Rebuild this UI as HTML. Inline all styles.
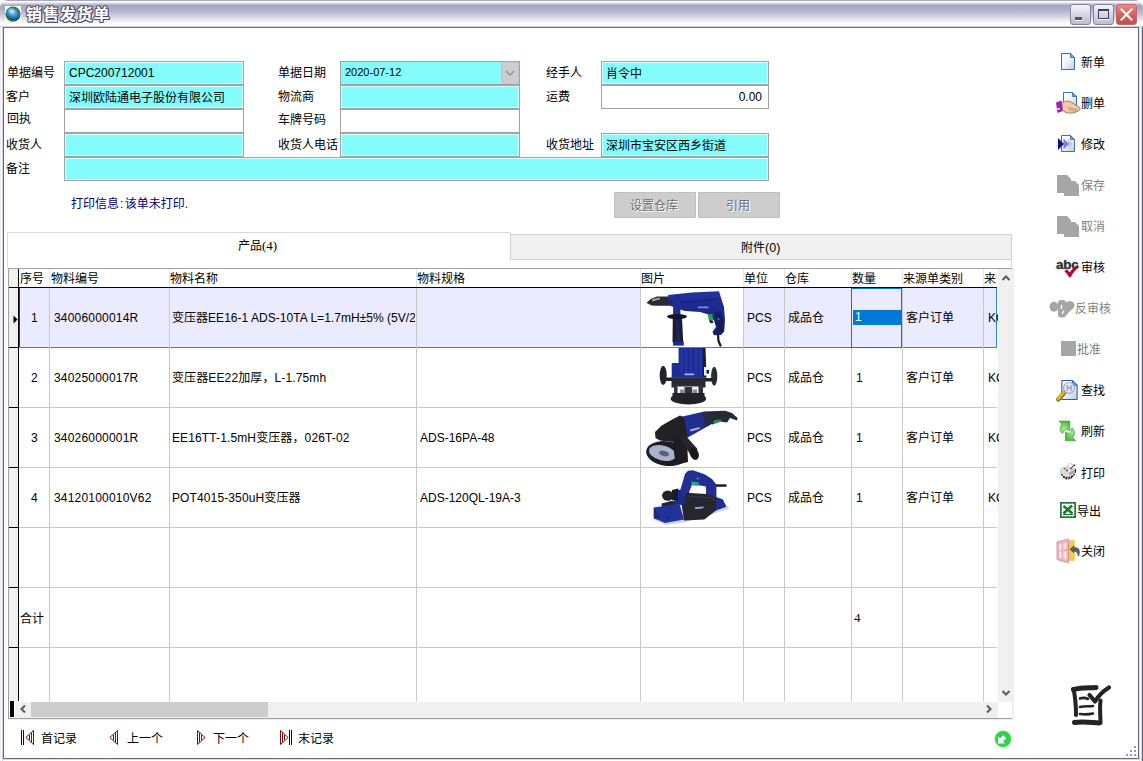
<!DOCTYPE html>
<html lang="zh-CN">
<head>
<meta charset="utf-8">
<title>销售发货单</title>
<style>
*{box-sizing:border-box;margin:0;padding:0}
html,body{width:1143px;height:761px;overflow:hidden;background:#fff}
body{position:relative;font-family:"Liberation Sans","Noto Sans CJK SC",sans-serif;font-size:12px;color:#000;line-height:14px}
.abs{position:absolute}
/* window frame */
#frame-l{left:0;top:0;width:4px;height:761px;background:linear-gradient(90deg,#ededf3 0,#ededf3 1px,#fff 1px,#fff 2px,#d2d2e2 2px,#d2d2e2 3px,#66667f 3px,#66667f 4px)}
#frame-r{left:1138px;top:0;width:5px;height:761px;background:linear-gradient(90deg,#66667f 0,#66667f 1px,#e2e2ee 1px,#e2e2ee 2px,#fff 2px,#fff 3px,#d6d6e6 3px,#d6d6e6 4px,#62627a 4px,#62627a 5px)}
#frame-b{left:3px;top:758px;width:1136px;height:3px;background:linear-gradient(180deg,#66667f 0,#66667f 1px,#dadae8 1px,#dadae8 2px,#fff 2px,#fff 3px)}
#titlebar{left:0;top:0;width:1143px;height:28px;background:linear-gradient(180deg,#a9a9b9 0,#a9a9b9 1px,#fff 1px,#fff 2px,#ececf2 2.5px,#c6c6d6 4px,#a6a6c1 5.5px,#adadc6 9px,#c4c4d6 14px,#dcdce6 18px,#f6f6f9 22px,#fff 24px,#fff 26px,#cfcfd9 26px,#cfcfd9 27px,#707088 27px,#707088 28px);border-radius:8px 8px 0 0}
#title{left:26px;top:5px;font-size:16px;line-height:20px;font-weight:bold;color:#fff;letter-spacing:0.9px;text-shadow:1px 1px 0 #4a4a64,-1px 0 0 #5e5e7a,0 -1px 0 #5e5e7a,1px 0 0 #4a4a64,0 1px 0 #4a4a64,-1px -1px 0 #6a6a86,1px -1px 0 #5e5e7a,-1px 1px 0 #5e5e7a}
.tb{top:4px;width:21px;height:21px;border-radius:3px;border:1px solid #8484a0;background:linear-gradient(180deg,#f4f4f9 0,#d4d4e2 55%,#bdbdd0 100%)}
/* form */
.lbl{height:14px;white-space:nowrap}
.fld{height:24px;border:1px solid #a3a3a3;background:#fff;box-shadow:inset 0 0 0 1px #fff;padding:4px 0 0 4px;white-space:nowrap;overflow:hidden}
.cy{background:#84fcfc;box-shadow:inset 0 0 0 1px #d6ffff}
.btn{height:26px;background:#cdcdcd;border:1px solid #c0c0c0;color:#707070;text-align:center;line-height:26px;padding-right:2px;text-shadow:1px 1px 0 #fff}
/* grid */
.vl{width:1px;background:#c8c8c8}
.hl{height:1px;background:#c8c8c8}
.cell{white-space:nowrap;overflow:hidden;height:14px}
.side{white-space:nowrap;height:14px}
.nav{white-space:nowrap;height:14px;top:732px}
</style>
</head>
<body>
<!-- title bar -->
<div id="titlebar" class="abs"></div>
<div id="frame-l" class="abs" style="top:27px"></div>
<div id="frame-r" class="abs" style="top:27px"></div>
<div id="frame-b" class="abs"></div>
<svg class="abs" style="left:5px;top:6px" width="16" height="16" viewBox="0 0 16 16">
<defs><radialGradient id="gl" cx="0.35" cy="0.35" r="0.7"><stop offset="0" stop-color="#e4f6ff"/><stop offset="0.400" stop-color="#4a9fe0"/><stop offset="1" stop-color="#0b4486"/></radialGradient></defs>
<rect width="16" height="16" fill="#fff"/>
<circle cx="8" cy="8.200" r="7.600" fill="#3a7a1c"/>
<ellipse cx="8" cy="8.300" rx="7.500" ry="5.700" transform="rotate(35 8 8)" fill="url(#gl)"/>
</svg>
<div id="title" class="abs">销售发货单</div>
<div class="abs tb" style="left:1070px"><div class="abs" style="left:4px;top:12px;width:7px;height:4px;background:#55556f;border-bottom:1px solid #fff"></div></div>
<div class="abs tb" style="left:1093px"><div class="abs" style="left:4px;top:4px;width:11px;height:10px;border:1px solid #3f3f5c;border-top-width:2px;box-shadow:0 1px 0 #fff"></div></div>
<div class="abs tb" style="left:1116px;background:linear-gradient(180deg,#e98a86 0,#d95f5c 50%,#c94f4e 100%);border-color:#c06a70">
<svg class="abs" style="left:2px;top:2px" width="15" height="15" viewBox="0 0 15 15"><path d="M1.800 1.800L13.200 13.200M13.200 1.800L1.800 13.200" stroke="#fff" stroke-width="2.300" stroke-linecap="butt"/></svg></div>

<!-- FORM -->
<div id="form">
<div class="abs lbl" style="left:7px;top:66px">单据编号</div>
<div class="abs fld cy" style="left:64px;top:61px;width:180px">CPC200712001</div>
<div class="abs lbl" style="left:6px;top:90px">客户</div>
<div class="abs fld cy" style="left:64px;top:85px;width:180px;padding-top:5px">深圳欧陆通电子股份有限公司</div>
<div class="abs lbl" style="left:7px;top:112px">回执</div>
<div class="abs fld" style="left:64px;top:109px;width:180px"></div>
<div class="abs lbl" style="left:6px;top:138px">收货人</div>
<div class="abs fld cy" style="left:64px;top:133px;width:180px"></div>
<div class="abs lbl" style="left:6px;top:162px">备注</div>
<div class="abs fld cy" style="left:64px;top:157px;width:705px;height:24px"></div>

<div class="abs lbl" style="left:278px;top:66px">单据日期</div>
<div class="abs fld cy" style="left:340px;top:61px;width:180px;font-size:11px;padding:3px 0 0 4px;box-shadow:none">2020-07-12</div>
<div class="abs" style="left:501px;top:62px;width:18px;height:22px;background:#cdcdcd;border:1px solid #b9c9da"><svg class="abs" style="left:3px;top:7px" width="10" height="6" viewBox="0 0 10 6"><path d="M0.800 0.800L5 5L9.200 0.800" fill="none" stroke="#868686" stroke-width="1.100"/></svg></div>
<div class="abs lbl" style="left:278px;top:90px">物流商</div>
<div class="abs fld cy" style="left:340px;top:85px;width:180px"></div>
<div class="abs lbl" style="left:278px;top:113px">车牌号码</div>
<div class="abs fld" style="left:340px;top:109px;width:180px"></div>
<div class="abs lbl" style="left:278px;top:138px">收货人电话</div>
<div class="abs fld cy" style="left:340px;top:133px;width:180px"></div>

<div class="abs lbl" style="left:546px;top:66px">经手人</div>
<div class="abs fld cy" style="left:601px;top:61px;width:168px;padding-top:5px">肖令中</div>
<div class="abs lbl" style="left:546px;top:90px">运费</div>
<div class="abs fld" style="left:601px;top:85px;width:168px;text-align:right;padding-right:6px">0.00</div>
<div class="abs lbl" style="left:546px;top:138px">收货地址</div>
<div class="abs fld cy" style="left:601px;top:133px;width:168px;padding-top:5px">深圳市宝安区西乡街道</div>

<div class="abs lbl" style="left:71px;top:197px;color:#000080">打印信息<span style="margin:0 1.500px 0 1px">:</span>该单未打印.</div>
<div class="abs btn" style="left:614px;top:192px;width:82px">设置仓库</div>
<div class="abs btn" style="left:698px;top:192px;width:82px">引用</div>
</div>
<!-- TABS -->
<div id="tabs">
<div class="abs" style="left:7px;top:232px;width:504px;height:28px;border:1px solid #d9d9d9;border-bottom:0;background:#fff"></div><div class="abs" style="left:7px;top:259px;width:1px;height:10px;background:#d9d9d9"></div>
<div class="abs" style="left:510px;top:234px;width:502px;height:26px;border:1px solid #d0d0d0;background:#f0f0f0"></div>
<div class="abs" style="left:1011px;top:259px;width:1px;height:10px;background:#d9d9d9"></div>
<div class="abs" style="left:238px;top:239px;height:14px;white-space:nowrap">产品<span style="font-family:'Liberation Serif',serif;font-size:13px">(4)</span></div>
<div class="abs" style="left:741px;top:241px;height:14px;white-space:nowrap">附件<span style="font-size:12.5px">(0)</span></div>
</div>
<!-- GRID -->
<div id="grid">
<div class="abs" style="left:8px;top:268px;width:1006px;height:452px;background:#eee"></div><div class="abs" style="left:8px;top:268px;width:1004px;height:451px;border:1px solid #a0a0a0;border-right:0;background:#fff"></div>
<div class="abs" style="left:19px;top:288px;width:978px;height:60px;background:#ebebff;border-right:1px solid #2a8ad4;border-bottom:1px solid #2a8ad4"></div>
<div class="abs" style="left:641px;top:288px;width:102px;height:59px;background:#fff"></div>
<div class="abs" style="left:9px;top:269px;width:9px;height:432px;background:#f0f0f0"></div>
<div class="abs" style="left:18px;top:269px;width:1px;height:432px;background:#000"></div>
<div class="abs" style="left:998px;top:269px;width:16px;height:433px;background:#f0f0f0"></div>
<div class="abs" style="left:15px;top:702px;width:983px;height:16px;background:#f0f0f0"></div>
<div class="abs" style="left:998px;top:702px;width:14px;height:16px;background:#fff"></div>
<div class="abs" style="left:10px;top:701px;width:4px;height:16px;background:#000"></div>
<div class="abs" style="left:31px;top:702px;width:237px;height:15px;background:#cdcdcd"></div>
<div class="abs vl" style="left:49px;top:288px;height:413px"></div>
<div class="abs vl" style="left:49px;top:269px;height:18px;background:#e5e5e5"></div>
<div class="abs vl" style="left:169px;top:288px;height:413px"></div>
<div class="abs vl" style="left:169px;top:269px;height:18px;background:#e5e5e5"></div>
<div class="abs vl" style="left:416px;top:288px;height:413px"></div>
<div class="abs vl" style="left:416px;top:269px;height:18px;background:#e5e5e5"></div>
<div class="abs vl" style="left:640px;top:288px;height:413px"></div>
<div class="abs vl" style="left:640px;top:269px;height:18px;background:#e5e5e5"></div>
<div class="abs vl" style="left:743px;top:288px;height:413px"></div>
<div class="abs vl" style="left:743px;top:269px;height:18px;background:#e5e5e5"></div>
<div class="abs vl" style="left:784px;top:288px;height:413px"></div>
<div class="abs vl" style="left:784px;top:269px;height:18px;background:#e5e5e5"></div>
<div class="abs vl" style="left:851px;top:288px;height:413px"></div>
<div class="abs vl" style="left:851px;top:269px;height:18px;background:#e5e5e5"></div>
<div class="abs vl" style="left:902px;top:288px;height:413px"></div>
<div class="abs vl" style="left:902px;top:269px;height:18px;background:#e5e5e5"></div>
<div class="abs vl" style="left:983px;top:288px;height:413px"></div>
<div class="abs vl" style="left:983px;top:269px;height:18px;background:#e5e5e5"></div>
<div class="abs" style="left:9px;top:287px;width:988px;height:1px;background:#000"></div>
<div class="abs hl" style="left:19px;top:407px;width:978px"></div>
<div class="abs" style="left:9px;top:407px;width:10px;height:1px;background:#000"></div>
<div class="abs hl" style="left:19px;top:467px;width:978px"></div>
<div class="abs" style="left:9px;top:467px;width:10px;height:1px;background:#000"></div>
<div class="abs hl" style="left:19px;top:527px;width:978px"></div>
<div class="abs" style="left:9px;top:527px;width:10px;height:1px;background:#000"></div>
<div class="abs hl" style="left:19px;top:587px;width:978px"></div>
<div class="abs" style="left:9px;top:587px;width:10px;height:1px;background:#000"></div>
<div class="abs hl" style="left:19px;top:647px;width:978px"></div>
<div class="abs" style="left:9px;top:647px;width:10px;height:1px;background:#000"></div>
<div class="abs" style="left:9px;top:347px;width:10px;height:1px;background:#000"></div>
<div class="abs cell" style="left:20px;top:272px">序号</div>
<div class="abs cell" style="left:51px;top:272px">物料编号</div>
<div class="abs cell" style="left:170px;top:272px">物料名称</div>
<div class="abs cell" style="left:417px;top:272px">物料规格</div>
<div class="abs cell" style="left:641px;top:272px">图片</div>
<div class="abs cell" style="left:744px;top:272px">单位</div>
<div class="abs cell" style="left:785px;top:272px">仓库</div>
<div class="abs cell" style="left:852px;top:272px">数量</div>
<div class="abs cell" style="left:903px;top:272px">来源单类别</div>
<div class="abs cell" style="left:984px;top:272px;width:13px">来源</div>
<div class="abs cell" style="left:31px;top:311px">1</div>
<div class="abs cell" style="left:54px;top:311px;letter-spacing:0.2px">34006000014R</div>
<div class="abs cell" style="left:172px;top:311px;width:243px;letter-spacing:0.030px">变压器EE16-1 ADS-10TA L=1.7mH±5% (5V/2A)</div>
<div class="abs cell" style="left:747px;top:311px">PCS</div>
<div class="abs cell" style="left:788px;top:311px">成品仓</div>
<div class="abs cell" style="left:906px;top:311px">客户订单</div>
<div class="abs cell" style="left:988px;top:311px;width:10px">KC</div>
<div class="abs cell" style="left:31px;top:371px">2</div>
<div class="abs cell" style="left:54px;top:371px;letter-spacing:0.2px">34025000017R</div>
<div class="abs cell" style="left:172px;top:371px;width:244px;letter-spacing:0.120px">变压器EE22加厚，L-1.75mh</div>
<div class="abs cell" style="left:747px;top:371px">PCS</div>
<div class="abs cell" style="left:788px;top:371px">成品仓</div>
<div class="abs cell" style="left:856px;top:371px">1</div>
<div class="abs cell" style="left:906px;top:371px">客户订单</div>
<div class="abs cell" style="left:988px;top:371px;width:11px">KC</div>
<div class="abs cell" style="left:31px;top:431px">3</div>
<div class="abs cell" style="left:54px;top:431px;letter-spacing:0.2px">34026000001R</div>
<div class="abs cell" style="left:172px;top:431px;width:244px;letter-spacing:0.120px">EE16TT-1.5mH变压器，026T-02</div>
<div class="abs cell" style="left:420px;top:431px">ADS-16PA-48</div>
<div class="abs cell" style="left:747px;top:431px">PCS</div>
<div class="abs cell" style="left:788px;top:431px">成品仓</div>
<div class="abs cell" style="left:856px;top:431px">1</div>
<div class="abs cell" style="left:906px;top:431px">客户订单</div>
<div class="abs cell" style="left:988px;top:431px;width:11px">KC</div>
<div class="abs cell" style="left:31px;top:491px">4</div>
<div class="abs cell" style="left:54px;top:491px;letter-spacing:0.2px">34120100010V62</div>
<div class="abs cell" style="left:172px;top:491px;width:244px;letter-spacing:0.120px">POT4015-350uH变压器</div>
<div class="abs cell" style="left:420px;top:491px">ADS-120QL-19A-3</div>
<div class="abs cell" style="left:747px;top:491px">PCS</div>
<div class="abs cell" style="left:788px;top:491px">成品仓</div>
<div class="abs cell" style="left:856px;top:491px">1</div>
<div class="abs cell" style="left:906px;top:491px">客户订单</div>
<div class="abs cell" style="left:988px;top:491px;width:11px">KC</div>
<div class="abs" style="left:851px;top:288px;width:51px;height:60px;border:1px solid #0078d7"></div>
<div class="abs cell" style="left:853px;top:310px;width:48px;height:15px;background:#0078d7;color:#fff;padding-left:2px">1</div>
<div class="abs cell" style="left:20px;top:612px">合计</div>
<div class="abs cell" style="left:854px;top:611px;font-family:'Liberation Serif',serif;font-size:13px">4</div>
<svg class="abs" style="left:13px;top:315px" width="5" height="9" viewBox="0 0 5 9"><path d="M0.5 0.5L4.5 4.5L0.5 8.5Z" fill="#000"/></svg>
<svg class="abs" style="left:1001px;top:274px" width="10" height="7" viewBox="0 0 10 7"><path d="M1.500 6L5 2.500L8.500 6" fill="none" stroke="#5a5a5a" stroke-width="2"/></svg>
<svg class="abs" style="left:1001px;top:690px" width="10" height="7" viewBox="0 0 10 7"><path d="M1.500 1L5 4.500L8.500 1" fill="none" stroke="#5a5a5a" stroke-width="2"/></svg>
<svg class="abs" style="left:19px;top:704px" width="7" height="10" viewBox="0 0 7 10"><path d="M6 1.500L2.500 5L6 8.500" fill="none" stroke="#5a5a5a" stroke-width="2"/></svg>
<svg class="abs" style="left:986px;top:704px" width="7" height="10" viewBox="0 0 7 10"><path d="M1 1.500L4.500 5L1 8.500" fill="none" stroke="#5a5a5a" stroke-width="2"/></svg>
</div>
<div id="imgs">
<div class="abs" style="left:641px;top:348px;width:102px;height:59px;background:#fff"></div>
<svg class="abs" style="left:640px;top:287px" width="105" height="62" viewBox="0 0 105 62">
<defs><filter id="bl" x="-5%" y="-5%" width="110%" height="110%"><feGaussianBlur stdDeviation="0.45"/></filter>
<linearGradient id="bluv" x1="0" y1="0" x2="0" y2="1"><stop offset="0" stop-color="#2232a0"/><stop offset="1" stop-color="#151d6c"/></linearGradient></defs>
<g filter="url(#bl)">
<path d="M6.400 15.800L11.500 11.500L17 9.500H30V18.800H17L11.500 18.500Z" fill="#2c2c36"/>
<path d="M12 12L20 10.500V12.500L12 14.500Z" fill="#9a9aa6"/>
<path d="M28 8L52 5.500L79 4.300L80.500 9L84 20L85 33L84.200 44.500L81 48L74 48.300L72.500 45L76 40L74 33.500L68.500 27.500L60 25L45 24L40 22.500L29.500 18.500Z" fill="url(#bluv)"/>
<path d="M30 16L60 14L79 12" stroke="#141d6a" stroke-width="1.200" fill="none"/>
<path d="M58 19.500H68.500V21.200H58Z" fill="#7f8fe0"/>
<path d="M74 26L80 24L83 33L82.500 44L79 47L78 38Z" fill="#141a52" opacity="0.750"/><path d="M67.500 27.500L72.500 27L73 34.500L69.500 35.500Z" fill="#25a05a"/>
<path d="M69.500 33L72.500 34L73.500 36L70.500 36.200Z" fill="#15151c"/>
<circle cx="78.500" cy="32" r="1.100" fill="#2a8ad0"/>
<path d="M78 48L78.500 54L80.500 58.500" stroke="#15151c" stroke-width="2.200" fill="none" stroke-linecap="round"/>
<path d="M33.500 9L40 8.500L40.500 29H33Z" fill="#1f2e96"/>
<ellipse cx="37" cy="29.600" rx="10" ry="2.600" fill="#13152a"/>
<path d="M32.800 31.500H42L43.200 55H32.500Z" fill="#1a1b2a"/>
<path d="M36 33L39 33L40 54H36.500Z" fill="#202c7c" opacity="0.700"/>
<path d="M33 54.500H43.800V58.600H33Z" fill="#1c2a94"/>
</g></svg>
<svg class="abs" style="left:640px;top:347px" width="105" height="62" viewBox="0 0 105 62">
<g filter="url(#bl)">
<path d="M38.600 1H63.400V30.500H31.700V16H38.600Z" fill="#1f2d96"/>
<path d="M41.500 2V28M46 2V28M51 2V28M56 2V28M60.500 2V28" stroke="#3446b8" stroke-width="0.700"/>
<path d="M63 1H65.500L66.500 30.500H63Z" fill="#1a1a24"/>
<path d="M64 20H67.500V28.500H64Z" fill="#f2f2f6"/>
<path d="M66.500 23H69V26.500H66.500Z" fill="#16162a"/>
<path d="M44.500 26.500H54V28.200H44.500Z" fill="#a9b4ee"/>
<path d="M31.500 30.300H65.500V40.500H31.500Z" fill="#2c2c36"/>
<ellipse cx="23.200" cy="28.400" rx="3.500" ry="9.600" fill="#23232c"/>
<path d="M25 30.500H32V34H25Z" fill="#23232c"/>
<ellipse cx="74.200" cy="29.200" rx="3.100" ry="9.500" fill="#2b2b34"/>
<path d="M65 31H72V34.500H65Z" fill="#23232c"/>
<path d="M36.500 39.500H60V47H36.500Z" fill="#f4f4f6"/>
<path d="M34 38H37.500V48H34ZM44.500 40H52V47H44.500ZM58.500 38H63V48H58.500Z" fill="#30303a"/>
<path d="M40 42.500H44V46H40ZM52.500 42.500H57V46H52.500Z" fill="#8c8c96"/>
<ellipse cx="48.400" cy="51.700" rx="17.700" ry="5.800" fill="#202028"/>
<path d="M32.500 46H64.500V52H32.500Z" fill="#24242c"/>
</g></svg>
<svg class="abs" style="left:640px;top:407px" width="105" height="62" viewBox="0 0 105 62">
<g filter="url(#bl)">
<ellipse cx="26.600" cy="46.600" rx="20.600" ry="12.300" fill="#1b1b22" transform="rotate(8 26.600 46.600)"/>
<ellipse cx="22.500" cy="46" rx="13.800" ry="7.600" fill="#a9b3c9" transform="rotate(14 22.500 46)"/>
<ellipse cx="24" cy="46.500" rx="5" ry="2.600" fill="#59607a" transform="rotate(14 24 46.500)"/>
<path d="M64 4.600L85 3.800L92 6L97.600 11L97 13.600L90 11L87 15.500L80 14.500L72.500 17.500L64 12Z" fill="#282a30"/>
<path d="M74 13L82 12.500L80 15L73 17Z" fill="#2b8a58"/>
<path d="M40.400 10L64.300 4.600L72.600 16.500L47.800 30.500Z" fill="#222d8e"/>
<path d="M62 7L70 6L73 16L66 20Z" fill="#262a44"/>
<path d="M50 22.500L59.500 20V22L50.500 24.500Z" fill="#a9b4ee"/>
<path d="M15 25L21 19L33 12L40 8.500L44 10.500L46 22L48 30L40 36.500L33 35L20 33.500L15.500 31Z" fill="#202026"/>
<path d="M33 33L40 29L47 31L48 55L36 58L34 46Z" fill="#1d1d24"/>
<path d="M38.500 29.500L45 28L57.500 42L52 50Z" fill="#25252c"/>
<ellipse cx="54.300" cy="46.800" rx="4.300" ry="6.200" fill="#16161c" transform="rotate(-20 54.300 46.800)"/>
</g></svg>
<svg class="abs" style="left:640px;top:467px" width="105" height="62" viewBox="0 0 105 62">
<g filter="url(#bl)">
<path d="M11 51.500L43 49L88 39.500L89 42L46 55L26 58Z" fill="#cdd4e6"/>
<path d="M76 30L82.700 32.200L86.500 39.800L76 43.500Z" fill="#202d92"/>
<path d="M76 17.300H86.500V19.800H76Z" fill="#1a1a22"/>
<path d="M40 24L45 7L48 3.700L53 3.200L64.500 7.300L72 12L76.300 17.500L76.500 31L66 28L66 19.500L52.400 17L49.500 24L47 37L40 38Z" fill="#202d92"/>
<path d="M51.400 14.500L58.500 15.200L58.800 19L51.400 18.200Z" fill="#25a58a"/>
<circle cx="57.600" cy="11.500" r="1.100" fill="#2a9ad0"/>
<path d="M46.800 25.700L66 27L76.300 30.300V43.300L64.300 52.400L44 53.500L41.500 37Z" fill="#25252d"/>
<path d="M48 29L70 30.500L75 33" stroke="#3a3a44" stroke-width="1" fill="none"/>
<path d="M55 40.300L63.500 39.500V41.300L55 42.300Z" fill="#9aa4dc"/>
<path d="M33.500 23.500L40.500 22.500L46 37L34 38Z" fill="#1e2b8e"/>
<ellipse cx="27.800" cy="28.600" rx="5.800" ry="5.200" fill="#202028"/>
<path d="M21.500 36.500L33 33.500L36 38L22 40.500Z" fill="#26262e"/>
<path d="M32 23L38 21.500V33H32Z" fill="#1f1f28"/>
<path d="M13.800 40.400L39.500 36.700L44 52.500L25 56L13.800 51Z" fill="#213099"/>
<path d="M13.800 40.400L17 46.500L16.500 52.500L13.800 51Z" fill="#1a2682"/>
<circle cx="18.500" cy="49.300" r="0.900" fill="#121a5a"/><circle cx="28" cy="50.500" r="0.900" fill="#121a5a"/>
</g></svg>
<div class="abs vl" style="left:640px;top:288px;height:240px"></div>
<div class="abs vl" style="left:743px;top:288px;height:240px"></div>
<div class="abs" style="left:641px;top:347px;width:102px;height:1px;background:#2a8ad4"></div>
<div class="abs hl" style="left:641px;top:407px;width:102px"></div>
<div class="abs hl" style="left:641px;top:467px;width:102px"></div>
<div class="abs hl" style="left:641px;top:527px;width:102px"></div>
</div>
<div class="abs" style="left:19px;top:288px;width:1px;height:59px;background:#1c3f7c"></div>
<!-- SIDEBAR -->
<div id="sidebar">
<svg width="0" height="0" style="position:absolute"><defs>
<linearGradient id="docg" x1="0" y1="0" x2="1" y2="1"><stop offset="0" stop-color="#fff"/><stop offset="0.5" stop-color="#eef2f8"/><stop offset="1" stop-color="#b9cbe6"/></linearGradient>
<linearGradient id="grn" x1="0" y1="0" x2="0" y2="1"><stop offset="0" stop-color="#8fe07e"/><stop offset="1" stop-color="#2e9c2a"/></linearGradient>
</defs></svg>
<svg class="abs" style="left:1061px;top:53px" width="14" height="17" viewBox="0 0 14 17"><path d="M0.5 0.5H9.5L13.5 4.5V16.5H0.5Z" fill="url(#docg)" stroke="#2c5f9f" stroke-width="0.900"/><path d="M9.5 0.5V4.5H13.5Z" fill="#7ea6d8" stroke="#2f66ad" stroke-width="0.8"/></svg>
<div class="abs side" style="left:1081px;top:56px">新单</div>
<svg class="abs" style="left:1063px;top:92px" width="14" height="17" viewBox="0 0 14 17"><path d="M0.5 0.5H9.5L13.5 4.5V16.5H0.5Z" fill="url(#docg)" stroke="#2c5f9f" stroke-width="0.900"/><path d="M9.5 0.5V4.5H13.5Z" fill="#7ea6d8" stroke="#2f66ad" stroke-width="0.8"/></svg>
<svg class="abs" style="left:1055px;top:99px" width="26" height="15" viewBox="0 0 26 15">
<path d="M1 3.5L6.5 1.5L8 12L2.5 14Z" fill="#9a1fc0"/><rect x="2.5" y="9" width="2" height="2" fill="#fff"/>
<path d="M7 4C10 1.5 14 1.5 17 3.5L24.5 8.5C25.5 9.5 25.3 11 24 11.5C20 14.5 14 14.5 11 13.5L7.5 11.5Z" fill="#f1c9a5" stroke="#8a6648" stroke-width="0.8"/>
<path d="M13 8.5L23 11M13.5 10.5L21 12.5" stroke="#a17a58" stroke-width="0.7" fill="none"/></svg>
<div class="abs side" style="left:1081px;top:97px">删单</div>
<svg class="abs" style="left:1061px;top:135px" width="14" height="17" viewBox="0 0 14 17"><path d="M0.5 0.5H9.5L13.5 4.5V16.5H0.5Z" fill="url(#docg)" stroke="#2c5f9f" stroke-width="0.900"/><path d="M9.5 0.5V4.5H13.5Z" fill="#7ea6d8" stroke="#2f66ad" stroke-width="0.8"/></svg>
<svg class="abs" style="left:1058px;top:138px" width="16" height="12" viewBox="0 0 16 12">
<path d="M10 1L15 6L10 11Z" fill="#c3c8ec"/><path d="M5.5 0.5L11 6L5.5 11.5Z" fill="#7b83d1"/><path d="M0 0L6 6L0 12Z" fill="#0a119c"/></svg>
<div class="abs side" style="left:1081px;top:138px">修改</div>
<svg class="abs" style="left:1057px;top:175px" width="22" height="21" viewBox="0 0 22 21"><path d="M0 0H10L14 4V6H18L22 10V21H7V18H0Z" fill="#a6a6a6"/></svg>
<div class="abs side" style="left:1081px;top:179px;color:#808080">保存</div>
<svg class="abs" style="left:1057px;top:216px" width="22" height="21" viewBox="0 0 22 21"><path d="M0 0H10L14 4V6H18L22 10V21H7V18H0Z" fill="#a6a6a6"/></svg>
<div class="abs side" style="left:1081px;top:220px;color:#808080">取消</div>
<div class="abs" style="left:1056px;top:257px;font-size:13.5px;line-height:16px;font-weight:bold;color:#2c2c2c;letter-spacing:-0.2px;height:16px;text-shadow:0 0 1.5px #888">abc</div>
<svg class="abs" style="left:1063px;top:264px" width="17" height="14" viewBox="0 0 17 14"><path d="M1.300 7.200L3.800 5.300L6.800 8.300C8.800 5 11.800 2.200 14.800 0.800L16 3.200C12.500 5.800 9.800 9.200 7.800 13.200H6C4.800 10.800 3.300 8.800 1.300 7.200Z" fill="#a80f35"/></svg>
<div class="abs side" style="left:1081px;top:261px">审核</div>

<svg class="abs" style="left:1049px;top:299px" width="27" height="20" viewBox="0 0 27 20">
<g fill="#a6a6a6"><ellipse cx="5" cy="7.800" rx="4.500" ry="5"/><rect x="9" y="1" width="8" height="17.500" rx="3"/><path d="M15 8L17 3.500C19 2 23 2 25.200 4.500V7.500L17.500 16L12 17Z"/><ellipse cx="21" cy="6.500" rx="4.300" ry="4.200"/></g>
<path d="M12.500 6.500V9.500M14.800 12L13.500 14.500" stroke="#fff" stroke-width="1.300" stroke-linecap="round"/></svg>
<div class="abs side" style="left:1075px;top:302px;color:#808080">反审核</div>
<div class="abs" style="left:1061px;top:341px;width:15px;height:15px;background:#a6a6a6"></div>
<div class="abs side" style="left:1077px;top:343px;color:#808080">批准</div>
<svg class="abs" style="left:1061px;top:380px" width="17" height="20" viewBox="0 0 14 17"><path d="M0.5 0.5H9.5L13.5 4.5V16.5H0.5Z" fill="url(#docg)" stroke="#2c5f9f" stroke-width="0.900"/><path d="M9.5 0.5V4.5H13.5Z" fill="#7ea6d8" stroke="#2f66ad" stroke-width="0.8"/></svg>
<svg class="abs" style="left:1055px;top:380px" width="24" height="24" viewBox="0 0 24 24">
<path d="M8.800 13.300L3.300 19.300" stroke="#8a6c10" stroke-width="4.600" stroke-linecap="round"/><path d="M8.600 12.700L3 18.600" stroke="#e2b424" stroke-width="3" stroke-linecap="round"/>
<circle cx="14" cy="7.900" r="5.400" fill="#e6eafb" stroke="#a3a3c6" stroke-width="1.200"/>
<text x="14" y="11" font-family="Liberation Sans,sans-serif" font-size="8.500" font-weight="bold" fill="#7fa2dc" text-anchor="middle">H</text></svg>
<div class="abs side" style="left:1081px;top:384px">查找</div>
<svg class="abs" style="left:1054px;top:416px" width="30" height="30" viewBox="0 0 30 30">
<defs><radialGradient id="gr1" cx="0.45" cy="0.65" r="0.7"><stop offset="0" stop-color="#a6f08c"/><stop offset="1" stop-color="#46b43c"/></radialGradient>
<radialGradient id="gr2" cx="0.6" cy="0.3" r="0.8"><stop offset="0" stop-color="#a6f08c"/><stop offset="1" stop-color="#3fae38"/></radialGradient></defs>
<path d="M5.100 5.100H15.800V14.600L13.800 13.800C12.800 12.800 11.200 13.200 9.900 15C9.300 16 9.100 16.800 9 17.300C7.700 17 6.900 16.400 6.700 15.800C6 14.500 6 13 6.300 11.800C6.600 10.300 7.200 9 7.900 7.900Z" fill="url(#gr1)" stroke="#3c9636" stroke-width="0.600"/>
<path d="M11.400 15.400C12 15.800 12.500 16.300 13 16.600C13.800 17.200 14.700 17.500 15.400 17.300C16.300 17 16.900 16.500 17 15.800C17.300 14.500 17.300 13.300 17.300 12.200L18.900 12.600C19.800 13.800 20.400 15.300 20.500 17C20.500 18.600 19.700 20.200 18.500 21.300L21.700 24.800H11.400Z" fill="url(#gr2)" stroke="#3c9636" stroke-width="0.600"/></svg>
<div class="abs side" style="left:1081px;top:425px">刷新</div>
<svg class="abs" style="left:1060px;top:463px" width="17" height="17" viewBox="0 0 17 17">
<path d="M0.600 6.200L4 4.300L15.300 6.200V9.600L9 12.300L0.600 10.300Z" fill="#e6e6e6" stroke="#9a9a9a" stroke-width="0.600"/>
<path d="M9 9.200L15.300 6.200V9.600L9 12.300Z" fill="#a8a8a8"/>
<path d="M0.600 6.200L9 9.200V12.300L0.600 10.300Z" fill="#dcdcdc"/>
<path d="M7 3L9.400 0.400L15.300 2.300L11.300 5.700Z" fill="#fafafa" stroke="#a0a0a0" stroke-width="0.600"/>
<path d="M15.400 2.300H13.800L11 5.200V6.500" fill="none" stroke="#111" stroke-width="0.900"/>
<path d="M15.500 6.200V9.700" stroke="#111" stroke-width="0.900"/>
<path d="M1.200 11.200C3 13.500 5.500 14.300 7.800 14.300C10.500 14.300 13 13 14.600 10.800" fill="none" stroke="#1a1a1a" stroke-width="1.300" stroke-dasharray="2 0.700"/>
<path d="M3 13.800C4.500 15.300 6 15.900 7.800 15.900C9.800 15.900 11.800 15 13.200 13.200" fill="none" stroke="#1a1a1a" stroke-width="1.100" stroke-dasharray="2 0.700"/>
<circle cx="4.700" cy="5.900" r="1.100" fill="#3cb84a"/><circle cx="7" cy="7.500" r="1.100" fill="#c8203c"/></svg>
<div class="abs side" style="left:1081px;top:467px">打印</div>
<svg class="abs" style="left:1060px;top:502px" width="16" height="16" viewBox="0 0 16 16">
<rect x="1" y="1" width="14" height="14" fill="#fff" stroke="#1f7a35" stroke-width="2" stroke-dasharray="1.2 0.5"/>
<rect x="0.5" y="0.5" width="15" height="15" fill="none" stroke="#1f7a35" stroke-width="1"/>
<path d="M3.5 4L12.5 11.5M12 3.5L3.5 11.5" stroke="#1f7a35" stroke-width="2.6"/><path d="M3 12.5H13" stroke="#1f7a35" stroke-width="1"/></svg>
<div class="abs side" style="left:1077px;top:505px">导出</div>
<svg class="abs" style="left:1056px;top:538px" width="26" height="26" viewBox="0 0 26 26">
<path d="M12.500 2.700H18.300V22.400H12.500Z" fill="#f0cf3c" stroke="#d2ae2a" stroke-width="0.500"/>
<path d="M1 4L12.5 1V25L1 21.5Z" fill="#efb3c0" stroke="#c98a9a" stroke-width="0.8"/>
<path d="M3 6.5L5.5 6V11.5L3 11.8ZM7.5 5.5L10.5 4.8V11L7.5 11.4ZM3 13.5L5.5 13.4V20L3 19.5ZM7.5 13.3L10.5 13.2V21.5L7.5 20.7Z" fill="#fbe2e8"/>
<circle cx="9.5" cy="12.3" r="0.9" fill="#e8a020"/>
<path d="M13.900 11.200L17.900 7.800V9.700C20 9.300 21.800 9.800 22.800 11.200C23.900 13 23.800 16 22.400 18.400C22 16.500 21.300 14.800 20.300 14C19.600 13.400 18.800 13.200 17.900 13.200V14.900Z" fill="#5c5c64" stroke="#3c3c44" stroke-width="0.400"/></svg>
<div class="abs side" style="left:1081px;top:545px">关闭</div>
<svg class="abs" style="left:1069px;top:683px" width="44" height="45" viewBox="0 0 44 45">
<g fill="none" stroke="#232328" stroke-linecap="round" stroke-linejoin="round">
<path d="M4.5 6.5C12 4.500 20 5 27 4.500" stroke-width="5"/>
<path d="M4.5 6C6.500 15 7 24 7 32" stroke-width="4"/>
<path d="M5.5 39.5C14 38 22 39.500 30 40" stroke-width="5"/>
<path d="M31.5 17.5C30.500 25 31.500 33 31.500 40" stroke-width="4"/>
<path d="M20.5 12L26 18.5C30 12 35 7.5 40 4.500" stroke-width="4.2"/>
<path d="M11 15.500C14 14.5 17 15 19 16" stroke-width="2.6"/>
<path d="M11 24C15 23 20 23.500 24 23" stroke-width="2.6"/>
<path d="M11 31C15 31.500 20 31.500 24 30.500" stroke-width="2.6"/>
</g></svg>
<div class="abs" style="left:1134px;top:746px;width:2px;height:2px;background:#9a9ab0"></div>
<div class="abs" style="left:1130px;top:750px;width:2px;height:2px;background:#9a9ab0"></div>
<div class="abs" style="left:1134px;top:750px;width:2px;height:2px;background:#9a9ab0"></div>
<div class="abs" style="left:1126px;top:754px;width:2px;height:2px;background:#9a9ab0"></div>
<div class="abs" style="left:1130px;top:754px;width:2px;height:2px;background:#9a9ab0"></div>
<div class="abs" style="left:1134px;top:754px;width:2px;height:2px;background:#9a9ab0"></div>
<svg class="abs" style="left:994px;top:730px" width="18" height="18" viewBox="0 0 18 18">
<circle cx="9" cy="9" r="8.2" fill="#2fd24a"/><circle cx="9" cy="9" r="8.2" fill="none" stroke="#7be88a" stroke-width="1" opacity="0.6"/>
<path d="M4 13.500V6.500L6 8.500L9.300 5.200L12.300 8.200L9 11.500L11 13.500Z" fill="#fff"/></svg>
</div>
<!-- NAV -->
<div id="nav">
<div class="abs" style="left:21px;top:730px;width:3px;height:15px;border-left:1px solid #000080;border-right:1px solid #000080"></div>
<svg class="abs" style="left:25px;top:730px" width="9" height="15" viewBox="0 0 9 15"><path d="M8.500 0.500V14.500L0.800 7.500Z" fill="#fff" stroke="#7a0c0c" stroke-width="1"/><path d="M6.500 3V12M4.500 5V10" stroke="#7a0c0c" stroke-width="1"/></svg>
<div class="abs nav" style="left:41px">首记录</div>
<svg class="abs" style="left:109px;top:730px" width="9" height="15" viewBox="0 0 9 15"><path d="M8.500 0.500V14.500L0.800 7.500Z" fill="#fff" stroke="#7a0c0c" stroke-width="1"/><path d="M6.500 3V12M4.500 5V10" stroke="#7a0c0c" stroke-width="1"/></svg>
<div class="abs nav" style="left:127px">上一个</div>
<svg class="abs" style="left:197px;top:730px" width="9" height="15" viewBox="0 0 9 15"><path d="M0.500 0.500V14.500L8.200 7.500Z" fill="#fff" stroke="#7a0c0c" stroke-width="1"/><path d="M2.500 3V12M4.500 5V10" stroke="#7a0c0c" stroke-width="1"/></svg>
<div class="abs nav" style="left:213px">下一个</div>
<svg class="abs" style="left:280px;top:730px" width="9" height="15" viewBox="0 0 9 15"><path d="M0.500 0.500V14.500L8.200 7.500Z" fill="#fff" stroke="#7a0c0c" stroke-width="1"/><path d="M2.500 3V12M4.500 5V10" stroke="#7a0c0c" stroke-width="1"/></svg>
<div class="abs" style="left:289px;top:730px;width:3px;height:15px;border-left:1px solid #000080;border-right:1px solid #000080"></div>
<div class="abs nav" style="left:298px">末记录</div>
</div>
</body>
</html>
